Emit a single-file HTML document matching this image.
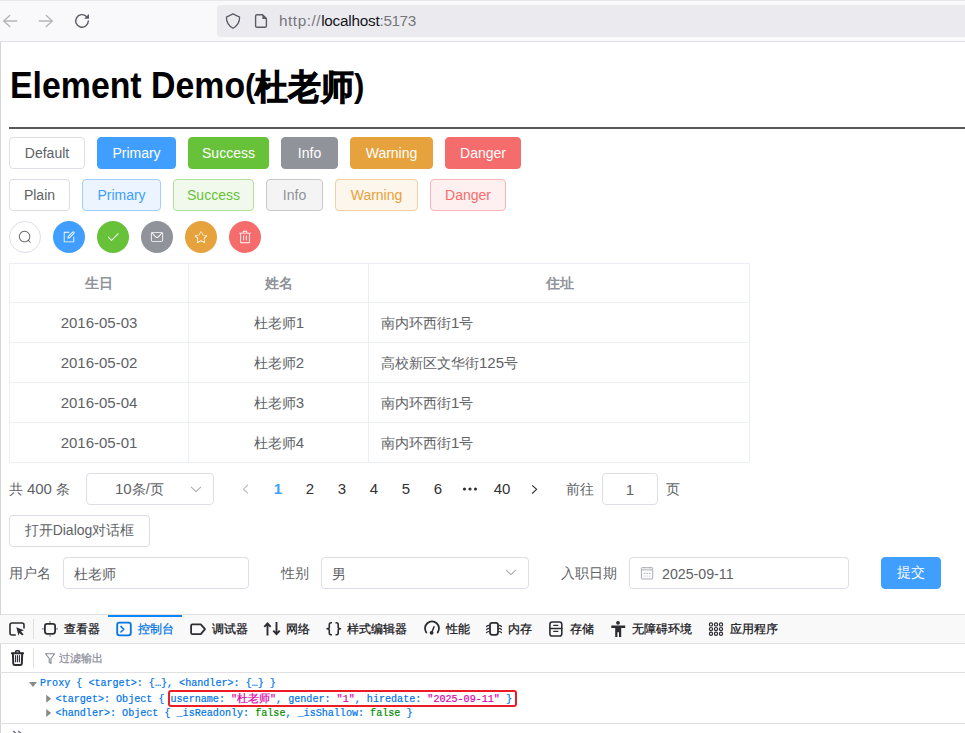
<!DOCTYPE html>
<html><head><meta charset="utf-8">
<style>
*{box-sizing:border-box;margin:0;padding:0}
html,body{width:965px;height:733px;overflow:hidden;background:#fff;font-family:"Liberation Sans",sans-serif}
.a{position:absolute;white-space:nowrap}
#chrome{position:absolute;left:0;top:0;width:965px;height:42px;background:#f9f9fb;border-top:1px solid #e8e8ec;border-bottom:1px solid #e0e0e6}
#url{position:absolute;left:217px;top:4px;width:760px;height:32px;background:#ebebef;border-radius:4px}
#lb{position:absolute;left:0;top:42px;width:1px;height:691px;background:#d4d4d8}
h1{position:absolute;left:9.5px;top:66px;font-size:36px;transform-origin:0 0;transform:scaleX(0.94);font-weight:bold;color:#000;white-space:nowrap;line-height:40px}
.pa{font-size:33px;position:relative;top:-1.5px}
.hr{position:absolute;left:9px;top:127px;width:956px;height:2px;background:#5a5a5a}
.btn{position:absolute;height:32px;border:1px solid #dcdfe6;border-radius:4px;color:#606266;font-size:14px;display:flex;align-items:center;justify-content:center;white-space:nowrap;background:#fff}
.r1{top:137px}.r2{top:179px}
.pri{background:#409eff;border-color:#409eff;color:#fff}
.suc{background:#67c23a;border-color:#67c23a;color:#fff}
.inf{background:#909399;border-color:#909399;color:#fff}
.war{background:#e6a23c;border-color:#e6a23c;color:#fff}
.dan{background:#f56c6c;border-color:#f56c6c;color:#fff}
.ppri{background:#ecf5ff;border-color:#a0cfff;color:#409eff}
.psuc{background:#f0f9eb;border-color:#b3e19d;color:#67c23a}
.pinf{background:#f4f4f5;border-color:#c8c9cc;color:#909399}
.pwar{background:#fdf6ec;border-color:#f3d19e;color:#e6a23c}
.pdan{background:#fef0f0;border-color:#fab6b6;color:#f56c6c}
.circ{position:absolute;top:221px;width:32px;height:32px;border-radius:50%;display:flex;align-items:center;justify-content:center}
.circ svg{width:14px;height:14px}
.tb{position:absolute;left:9px;top:263px;width:741px;height:200px;border:1px solid #ebeef5}
.hl{position:absolute;height:1px;background:#ebeef5}
.vl{position:absolute;width:1px;background:#ebeef5}
.cell{position:absolute;font-size:14px;color:#606266;white-space:nowrap;line-height:20px}
.th{color:#909399;font-weight:bold}
.d{font-size:15px}
.inp{position:absolute;height:32px;border:1px solid #dcdfe6;border-radius:4px;background:#fff}
.t14{font-size:14px;color:#606266;line-height:20px}
#devtools{position:absolute;left:1px;top:614px;width:964px;height:119px;background:#fff;border-top:1px solid #e0e0e2}
#dtb{position:absolute;left:0;top:0;width:964px;height:29px;background:#f9f9fb;border-bottom:1px solid #e0e0e2}
#ftb{position:absolute;left:0;top:29px;width:964px;height:29px;background:#fff;border-bottom:1px solid #e0e0e2}
.dt{position:absolute;font-size:12px;color:#15141a;white-space:nowrap;line-height:16px;-webkit-text-stroke:0.25px currentColor}
.ico{position:absolute}
.mono{position:absolute;font-family:"Liberation Mono",monospace;font-size:10.08px;white-space:pre;line-height:14px;color:#0074e8;-webkit-text-stroke:0.2px currentColor}
</style></head><body>
<div id="chrome">
  <svg class="ico" style="left:0;top:-1px" width="200" height="42" viewBox="0 0 200 42">
    <g fill="none" stroke="#b4b4ba" stroke-width="1.4" stroke-linecap="round" stroke-linejoin="round">
      <path d="M3.7 21H16.7M9.7 15.5L3.7 21L9.7 26.5"/>
      <path d="M39.3 21H52.3M46.3 15.5L52.3 21L46.3 26.5"/>
    </g>
    <g fill="none" stroke="#5b5b66" stroke-width="1.4" stroke-linecap="round">
      <path d="M88.3 21A6.3 6.3 0 1 1 86.4 16.4"/>
    </g>
    <path d="M84.1 18.8L89 18.8L89 13.9Z" fill="#5b5b66"/>
  </svg>
  <div id="url">
    <svg class="ico" style="left:8px;top:8px" width="16" height="17" viewBox="0 0 16 17"><path d="M8 0.8L1.4 4.1Q1.2 11.5 8 15.3Q14.8 11.5 14.6 4.1Z" fill="none" stroke="#5b5b66" stroke-width="1.3" stroke-linejoin="round"/></svg>
    <svg class="ico" style="left:37px;top:8px" width="16" height="16" viewBox="0 0 16 16"><path d="M3 1.8H8.6L12.4 5.6V12.9Q12.4 14.3 11 14.3H3Q1.6 14.3 1.6 12.9V3.2Q1.6 1.8 3 1.8Z" fill="none" stroke="#5b5b66" stroke-width="1.4" stroke-linejoin="round"/><path d="M8.4 1.4V5.9H12.8Z" fill="#5b5b66"/></svg>
    <div class="a" style="left:62px;top:7px;font-size:15.3px;line-height:18px;color:#77777c"><span style="letter-spacing:0.55px">http://</span><span style="color:#15141a;letter-spacing:-0.22px">localhost</span><span style="letter-spacing:-0.4px">:5173</span></div>
  </div>
</div>
<div id="lb"></div>
<h1>Element Demo<span class="pa">(</span><span style="-webkit-text-stroke:0.9px #000;font-size:34.5px;position:relative;top:1px">杜老师</span><span class="pa">)</span></h1>
<div class="hr"></div>
<div class="btn r1" style="left:9px;width:76px">Default</div>
<div class="btn r1 pri" style="left:97px;width:79px">Primary</div>
<div class="btn r1 suc" style="left:188px;width:81px">Success</div>
<div class="btn r1 inf" style="left:281px;width:57px">Info</div>
<div class="btn r1 war" style="left:350px;width:83px">Warning</div>
<div class="btn r1 dan" style="left:445px;width:76px">Danger</div>
<div class="btn r2" style="left:9px;width:61px">Plain</div>
<div class="btn r2 ppri" style="left:82px;width:79px">Primary</div>
<div class="btn r2 psuc" style="left:173px;width:81px">Success</div>
<div class="btn r2 pinf" style="left:266px;width:57px">Info</div>
<div class="btn r2 pwar" style="left:335px;width:83px">Warning</div>
<div class="btn r2 pdan" style="left:430px;width:76px">Danger</div>

<div class="circ" style="left:9px;border:1px solid #dcdfe6;background:#fff"><svg viewBox="0 0 1024 1024"><path fill="#606266" d="m795.904 750.72 124.992 124.928a32 32 0 0 1-45.248 45.248L750.656 795.904a416 416 0 1 1 45.248-45.248zM480 832a352 352 0 1 0 0-704 352 352 0 0 0 0 704z"/></svg></div>
<div class="circ" style="left:53px;background:#409eff"><svg viewBox="0 0 1024 1024"><path fill="#fff" d="M832 512a32 32 0 1 1 64 0v352a32 32 0 0 1-32 32H160a32 32 0 0 1-32-32V160a32 32 0 0 1 32-32h352a32 32 0 0 1 0 64H192v640h640V512z"/><path fill="#fff" d="m469.952 554.24 52.8-7.552L847.104 222.4a32 32 0 1 0-45.248-45.248L477.44 501.44l-7.552 52.8zm422.4-422.4a96 96 0 0 1 0 135.808l-331.84 331.84a32 32 0 0 1-18.112 9.088L436.8 623.68a32 32 0 0 1-36.224-36.224l15.104-105.6a32 32 0 0 1 9.024-18.112l331.904-331.84a96 96 0 0 1 135.744 0z"/></svg></div>
<div class="circ" style="left:97px;background:#67c23a"><svg viewBox="0 0 1024 1024"><path fill="#fff" d="M406.656 706.944 195.84 496.256a32 32 0 1 0-45.248 45.248l256 256 512-512a32 32 0 0 0-45.248-45.248L406.592 706.944z"/></svg></div>
<div class="circ" style="left:141px;background:#909399"><svg viewBox="0 0 1024 1024"><path fill="#fff" d="M128 224v512a64 64 0 0 0 64 64h640a64 64 0 0 0 64-64V224H128zm0-64h768a64 64 0 0 1 64 64v512a128 128 0 0 1-128 128H192A128 128 0 0 1 64 736V224a64 64 0 0 1 64-64z"/><path fill="#fff" d="M904 224 656.512 506.88a192 192 0 0 1-289.024 0L120 224h784zm-698.944 0 210.56 240.704a128 128 0 0 0 192.704 0L818.944 224H205.056z"/></svg></div>
<div class="circ" style="left:185px;background:#e6a23c"><svg viewBox="0 0 1024 1024"><path fill="#fff" d="m512 747.84 228.16 119.936a6.4 6.4 0 0 0 9.28-6.72l-43.52-254.08 184.512-179.904a6.4 6.4 0 0 0-3.52-10.88l-255.104-37.12L517.76 147.904a6.4 6.4 0 0 0-11.52 0L392.192 379.072l-255.104 37.12a6.4 6.4 0 0 0-3.520 10.88L318.08 606.976l-43.584 254.080a6.4 6.4 0 0 0 9.28 6.72L512 747.84zm0 71.04-238.72 125.44a38.4 38.4 0 0 1-55.68-40.448l45.568-265.856-193.088-188.16a38.4 38.4 0 0 1 21.248-65.408l266.88-38.784 119.36-241.856a38.4 38.4 0 0 1 68.864 0l119.296 241.856 266.88 38.784a38.4 38.4 0 0 1 21.312 65.408l-193.152 188.16 45.632 265.856a38.4 38.4 0 0 1-55.68 40.448L512 818.88z"/></svg></div>
<div class="circ" style="left:229px;background:#f56c6c"><svg viewBox="0 0 1024 1024"><path fill="#fff" d="M160 256H96a32 32 0 0 1 0-64h256V95.936a32 32 0 0 1 32-32h256a32 32 0 0 1 32 32V192h256a32 32 0 1 1 0 64h-64v672a32 32 0 0 1-32 32H192a32 32 0 0 1-32-32V256zm448-64v-64H416v64h192zM224 896h576V256H224v640zm192-128a32 32 0 0 1-32-32V416a32 32 0 0 1 64 0v320a32 32 0 0 1-32 32zm192 0a32 32 0 0 1-32-32V416a32 32 0 0 1 64 0v320a32 32 0 0 1-32 32z"/></svg></div>

<!-- TABLE -->
<div class="tb"></div>
<div class="hl" style="left:9px;top:302px;width:741px"></div>
<div class="hl" style="left:9px;top:342px;width:741px"></div>
<div class="hl" style="left:9px;top:382px;width:741px"></div>
<div class="hl" style="left:9px;top:422px;width:741px"></div>
<div class="vl" style="left:188px;top:263px;height:200px"></div>
<div class="vl" style="left:368px;top:263px;height:200px"></div>
<div class="cell th" style="left:9px;width:180px;top:273px;text-align:center">生日</div>
<div class="cell th" style="left:189px;width:180px;top:273px;text-align:center">姓名</div>
<div class="cell th" style="left:369px;width:381px;top:273px;text-align:center">住址</div>
<div class="cell" style="left:9px;width:180px;top:313px;text-align:center"><span class="d">2016-05-03</span></div>
<div class="cell" style="left:189px;width:180px;top:313px;text-align:center">杜老师<span class="d">1</span></div>
<div class="cell" style="left:381px;top:313px">南内环西街<span class="d">1</span>号</div>
<div class="cell" style="left:9px;width:180px;top:353px;text-align:center"><span class="d">2016-05-02</span></div>
<div class="cell" style="left:189px;width:180px;top:353px;text-align:center">杜老师<span class="d">2</span></div>
<div class="cell" style="left:381px;top:353px">高校新区文华街<span class="d">125</span>号</div>
<div class="cell" style="left:9px;width:180px;top:393px;text-align:center"><span class="d">2016-05-04</span></div>
<div class="cell" style="left:189px;width:180px;top:393px;text-align:center">杜老师<span class="d">3</span></div>
<div class="cell" style="left:381px;top:393px">南内环西街<span class="d">1</span>号</div>
<div class="cell" style="left:9px;width:180px;top:433px;text-align:center"><span class="d">2016-05-01</span></div>
<div class="cell" style="left:189px;width:180px;top:433px;text-align:center">杜老师<span class="d">4</span></div>
<div class="cell" style="left:381px;top:433px">南内环西街<span class="d">1</span>号</div>

<!-- PAGINATION -->
<div class="a t14" style="left:9px;top:479px">共 <span class="d">400</span> 条</div>
<div class="inp" style="left:86px;top:473px;width:128px"></div>
<div class="a t14" style="left:115px;top:479px"><span class="d">10</span>条/页</div>
<svg class="ico" style="left:190px;top:483.5px" width="12" height="10" viewBox="0 0 12 10"><path d="M1 2.8L6 7.6L11 2.8" fill="none" stroke="#a8abb2" stroke-width="1.1"/></svg>
<svg class="ico" style="left:240px;top:483px" width="12" height="12" viewBox="0 0 12 12"><path d="M7.8 2L3.4 6.2L7.8 10.4" fill="none" stroke="#b8bbc2" stroke-width="1.1"/></svg>
<div class="a" style="left:262px;top:479px;width:32px;text-align:center;font-size:14px;line-height:20px;font-weight:bold;color:#409eff;font-size:15px">1</div>
<div class="a" style="left:294px;top:479px;width:32px;text-align:center;font-size:14px;line-height:20px;color:#303133;font-size:15px">2</div>
<div class="a" style="left:326px;top:479px;width:32px;text-align:center;font-size:14px;line-height:20px;color:#303133;font-size:15px">3</div>
<div class="a" style="left:358px;top:479px;width:32px;text-align:center;font-size:14px;line-height:20px;color:#303133;font-size:15px">4</div>
<div class="a" style="left:390px;top:479px;width:32px;text-align:center;font-size:14px;line-height:20px;color:#303133;font-size:15px">5</div>
<div class="a" style="left:422px;top:479px;width:32px;text-align:center;font-size:14px;line-height:20px;color:#303133;font-size:15px">6</div>
<svg class="ico" style="left:462px;top:486px" width="16" height="6" viewBox="0 0 16 6"><circle cx="2.5" cy="3" r="1.6" fill="#303133"/><circle cx="8" cy="3" r="1.6" fill="#303133"/><circle cx="13.5" cy="3" r="1.6" fill="#303133"/></svg>
<div class="a" style="left:486px;top:479px;width:32px;text-align:center;font-size:14px;line-height:20px;color:#303133;font-size:15px">40</div>
<svg class="ico" style="left:528px;top:483px" width="12" height="12" viewBox="0 0 12 12"><path d="M4.2 2.3L8.6 6.3L4.2 10.5" fill="none" stroke="#303133" stroke-width="1.1"/></svg>
<div class="a t14" style="left:566px;top:479px">前往</div>
<div class="inp" style="left:602px;top:473px;width:56px"></div>
<div class="a t14" style="left:602px;width:56px;text-align:center;top:480px;font-size:15px">1</div>
<div class="a t14" style="left:666px;top:479px">页</div>

<!-- DIALOG BUTTON -->
<div class="btn" style="left:9px;top:515px;width:141px">打开Dialog对话框</div>

<!-- FORM -->
<div class="a t14" style="left:9px;top:563px">用户名</div>
<div class="inp" style="left:63px;top:557px;width:186px"></div>
<div class="a t14" style="left:74px;top:564px">杜老师</div>
<div class="a t14" style="left:281px;top:563px">性别</div>
<div class="inp" style="left:321px;top:557px;width:208px"></div>
<div class="a t14" style="left:332px;top:564px">男</div>
<svg class="ico" style="left:505px;top:567px" width="12" height="10" viewBox="0 0 12 10"><path d="M1 2.8L6 7.6L11 2.8" fill="none" stroke="#a8abb2" stroke-width="1.1"/></svg>
<div class="a t14" style="left:561px;top:563px">入职日期</div>
<div class="inp" style="left:629px;top:557px;width:220px"></div>
<svg class="ico" style="left:640px;top:566px" width="14" height="14" viewBox="0 0 14 14"><rect x="1.4" y="1.7" width="11.3" height="11.3" rx="0.6" fill="none" stroke="#a8abb2" stroke-width="1"/><path d="M1.4 3.9H12.7M4.3 0.9V2.4M9.8 0.9V2.4" stroke="#a8abb2" stroke-width="1"/><g fill="#a8abb2"><rect x="3.7" y="6.8" width="1.6" height="1.1"/><rect x="6.3" y="6.8" width="1.6" height="1.1"/><rect x="8.9" y="6.8" width="1.6" height="1.1"/></g><g fill="#d5d7dc"><rect x="3.7" y="9.5" width="1.6" height="1.1"/><rect x="6.3" y="9.5" width="1.6" height="1.1"/><rect x="8.9" y="9.5" width="1.6" height="1.1"/></g></svg>
<div class="a t14" style="left:662px;top:564px;font-size:14.2px">2025-09-11</div>
<div class="btn pri" style="left:881px;top:557px;width:60px">提交</div>

<!-- DEVTOOLS -->
<div id="devtools"></div>
<div class="a" style="left:0;top:615px;width:965px;height:28px;background:#f9f9f9"></div>
<div class="a" style="left:0;top:643px;width:965px;height:1px;background:#e0e0e2"></div>
<div class="a" style="left:0;top:672px;width:965px;height:1px;background:#e0e0e2"></div>
<div class="a" style="left:0;top:723px;width:965px;height:1px;background:#e0e0e2"></div>
<div class="a" style="left:108px;top:615px;width:74px;height:2px;background:#0a84ff"></div>
<div class="a" style="left:33px;top:619px;width:1px;height:20px;background:#e0e0e2"></div>
<div class="a" style="left:33px;top:648px;width:1px;height:20px;background:#e0e0e2"></div>
<svg class="ico" style="left:0;top:614px" width="800" height="30" viewBox="0 614 800 30">
 <g fill="none" stroke="#2d2d33" stroke-width="1.6" stroke-linejoin="round" stroke-linecap="round">
  <path d="M15.2 635H12Q10 635 10 633V625Q10 623 12 623H22Q24 623 24 625V628"/>
 </g>
 <path d="M16.3 627.2L23.9 630.2L20.9 631.4L23.6 634.2L22.2 635.6L19.5 632.9L18.5 635.8Z" fill="#2d2d33"/>
 <g fill="none" stroke="#2d2d33" stroke-width="1.8">
  <rect x="44.9" y="623.8" width="10.2" height="10" rx="2.2"/>
 </g>
 <path d="M50 621V623M50 634.7V636.8M41.9 628.8H44M56 628.8H58" stroke="#8a8a92" stroke-width="1.3"/>
 <g fill="none" stroke="#0074e8" stroke-width="1.8" stroke-linejoin="round" stroke-linecap="round">
  <rect x="117.2" y="622.7" width="13.6" height="12.6" rx="2.3"/>
  <path d="M120.9 626.4L123.8 629.2L120.9 632" stroke-width="1.5"/>
 </g>
 <path d="M192.5 624.3H200.8L205 629.2L200.8 634.1H192.5Q191.1 634.1 191.1 632.7V625.7Q191.1 624.3 192.5 624.3Z" fill="none" stroke="#2d2d33" stroke-width="1.8" stroke-linejoin="round"/>
 <g fill="none" stroke="#2d2d33" stroke-width="1.6" stroke-linecap="round" stroke-linejoin="round">
  <path d="M267.5 623.5V635.5M264.3 626.8L267.5 623.3L270.7 626.8" stroke-width="1.9" stroke-linecap="butt" stroke-linejoin="miter"/>
  <path d="M276.5 622V634.2M273.3 630.7L276.5 634.2L279.7 630.7" stroke-width="1.9" stroke-linecap="butt" stroke-linejoin="miter"/>
 </g>
 <g fill="none" stroke="#2d2d33" stroke-width="1.6" stroke-linejoin="round">
  <path d="M332 622.8H331Q329.3 622.8 329.3 624.5V627.3Q329.3 628.8 327 628.8Q329.3 628.8 329.3 630.3V633.1Q329.3 634.8 331 634.8H332"/>
  <path d="M335.5 622.8H336.5Q338.2 622.8 338.2 624.5V627.3Q338.2 628.8 340.5 628.8Q338.2 628.8 338.2 630.3V633.1Q338.2 634.8 336.5 634.8H335.5"/>
 </g>
 <g fill="none" stroke="#2d2d33" stroke-width="1.6" stroke-linecap="round">
  <path d="M426.3 632.5A7 7 0 1 1 437.7 632.5" stroke-width="1.8"/>
  <path d="M431.8 632.5L434 626.8" stroke-width="1.5"/>
 </g>
 <circle cx="431.6" cy="632.8" r="1.9" fill="#2d2d33"/>
 <g fill="none" stroke="#2d2d33" stroke-width="1.8">
  <rect x="490" y="622.9" width="8" height="11.9" rx="2.2"/>
 </g>
 <g fill="none" stroke="#2d2d33" stroke-width="1.2" stroke-linecap="round">
  <path d="M489.2 625.3Q487.6 625.3 486.5 626.5M489.2 628.4Q487.6 628.4 486.5 629.6M489.2 631.5Q487.6 631.5 486.5 632.7"/>
  <path d="M498.8 625.3Q500.4 625.3 501.5 626.5M498.8 628.4Q500.4 628.4 501.5 629.6M498.8 631.5Q500.4 631.5 501.5 632.7"/>
 </g>
 <g fill="none" stroke="#2d2d33" stroke-width="1.6" stroke-linecap="round">
  <rect x="549.9" y="622" width="11.9" height="14" rx="2.3"/>
  <path d="M550 628.5H561.7"/>
  <path d="M553.8 625.4H557.8M553.8 631.4H557.8" stroke-width="1.3"/>
 </g>
 <g fill="#2d2d33">
  <circle cx="618" cy="622.8" r="1.9"/>
  <path d="M611.3 625.6H625.2V627.9H621.2V637H619V632.3H617.4V637H615.2V627.9H611.3Z"/>
 </g>
 <g fill="none" stroke="#2d2d33" stroke-width="1.2">
  <circle cx="711" cy="624.4" r="1.6"/><circle cx="716" cy="624.4" r="1.6"/><circle cx="721" cy="624.4" r="1.6"/>
  <circle cx="711" cy="629.1" r="1.6"/><circle cx="716" cy="629.1" r="1.6"/><circle cx="721" cy="629.1" r="1.6"/>
  <circle cx="711" cy="633.8" r="1.6"/><circle cx="716" cy="633.8" r="1.6"/><circle cx="721" cy="633.8" r="1.6"/>
 </g>
</svg>
<div class="dt" style="left:64px;top:621px">查看器</div>
<div class="dt" style="left:138px;top:621px;color:#0074e8">控制台</div>
<div class="dt" style="left:212px;top:621px">调试器</div>
<div class="dt" style="left:286px;top:621px">网络</div>
<div class="dt" style="left:347px;top:621px">样式编辑器</div>
<div class="dt" style="left:446px;top:621px">性能</div>
<div class="dt" style="left:508px;top:621px">内存</div>
<div class="dt" style="left:570px;top:621px">存储</div>
<div class="dt" style="left:632px;top:621px">无障碍环境</div>
<div class="dt" style="left:730px;top:621px">应用程序</div>
<svg class="ico" style="left:0;top:644px" width="120" height="28" viewBox="0 644 120 28">
 <g fill="none" stroke="#2d2d33" stroke-width="1.6" stroke-linecap="round" stroke-linejoin="round">
  <path d="M11.9 653.2H23.1" stroke-width="2"/>
  <path d="M15.6 653V651.9Q15.6 650.7 16.8 650.7H18.3Q19.5 650.7 19.5 651.9V653" stroke-width="1.6"/>
  <path d="M12.9 653.6L13.3 663.7Q13.4 665.1 14.8 665.1H20.3Q21.7 665.1 21.8 663.7L22.2 653.6" stroke-width="2"/>
  <path d="M15.6 655.6V661.7M17.5 655.6V661.7M19.4 655.6V661.7" stroke-width="1.1"/>
 </g>
 <path d="M45.7 653.8H54.5L51 658.3V663.6L49.2 662.2V658.3Z" fill="#d8d8dc" stroke="#8f8f9d" stroke-width="1.1" stroke-linejoin="round"/><path d="M46.9 654.6H53.3L50.1 658.4Z" fill="#fff"/>
</svg>
<div class="dt" style="left:59px;top:650px;font-size:11px;color:#8f8f9d">过滤输出</div>
<svg class="ico" style="left:0;top:673px" width="70" height="50" viewBox="0 673 70 50">
 <path d="M29 682H37L33 687Z" fill="#8a8a8e"/>
 <path d="M46.2 694.8V702.8L51.2 698.8Z" fill="#8a8a8e"/>
 <path d="M46.2 709V717L51.2 713Z" fill="#8a8a8e"/>
</svg>
<div class="mono" style="left:40px;top:677px">Proxy { &lt;target&gt;: {…}, &lt;handler&gt;: {…} }</div>
<div class="mono" style="left:55.6px;top:692px">&lt;target&gt;: Object { username: <span style="color:#dd00a9">"<span style="font-size:10.9px">杜老师</span>"</span>, gender: <span style="color:#dd00a9">"1"</span>, hiredate: <span style="color:#dd00a9">"2025-09-11"</span> }</div>
<div class="mono" style="left:55.6px;top:707px">&lt;handler&gt;: Object { _isReadonly: <span style="color:#058b00">false</span>, _isShallow: <span style="color:#058b00">false</span> }</div>
<div class="a" style="left:168px;top:690px;width:349px;height:17px;border:2px solid #ec1c24;border-radius:3px"></div>
<svg class="ico" style="left:0;top:724px" width="40" height="9" viewBox="0 724 40 9"><path d="M13.3 731L16.8 734.5L13.3 738M18.3 731L21.8 734.5L18.3 738" fill="none" stroke="#7a7a84" stroke-width="1.7"/></svg>

</body></html>
